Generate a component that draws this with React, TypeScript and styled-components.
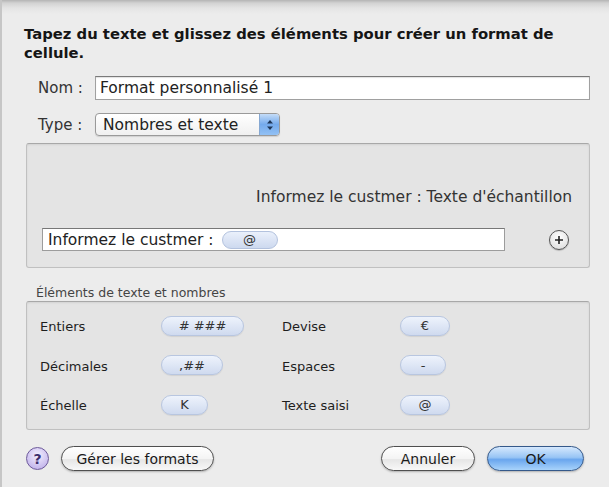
import React from 'react';
import styled, { createGlobalStyle } from 'styled-components';

const GlobalStyle = createGlobalStyle`
  html, body {
    margin: 0;
    padding: 0;
    background: #ececec;
  }
  * { box-sizing: border-box; }
`;

const Sheet = styled.div`
  width: 609px;
  height: 487px;
  background: linear-gradient(to bottom, #b4b4b4 0px, #d2d2d2 3px, #e4e4e4 8px, #ececec 14px);
  border-left: 2px solid #c6c6c6;
  font-family: "DejaVu Sans", "Liberation Sans", sans-serif;
  color: #1a1a1a;
  padding: 24px 19px 0 22px;
  display: flex;
  flex-direction: column;
`;

const Heading = styled.h1`
  margin: 0;
  font-size: 14.8px;
  font-weight: bold;
  line-height: 19px;
  color: #151515;
`;

const FieldRow = styled.div<{ $top: number }>`
  display: flex;
  align-items: center;
  margin-top: ${p => p.$top}px;
  padding-left: 14px;
`;

const Label = styled.span`
  width: 57px;
  font-size: 15px;
  color: #333;
  white-space: nowrap;
`;

const TextField = styled.div`
  flex: 1;
  height: 24px;
  background: #fff;
  border: 1px solid #a0a0a0;
  border-top-color: #7a7a7a;
  box-shadow: inset 0 1px 1px rgba(0, 0, 0, 0.12);
  font-size: 15.5px;
  line-height: 22px;
  padding-left: 4px;
  color: #222;
`;

const Select = styled.div`
  width: 185px;
  height: 23px;
  display: flex;
  align-items: center;
  justify-content: space-between;
  background: linear-gradient(#ffffff, #f0f0f0);
  border: 1px solid #9a9a9a;
  border-radius: 4px;
  font-size: 15.5px;
  padding-left: 7px;
  overflow: hidden;
  box-shadow: 0 1px 1px rgba(0, 0, 0, 0.12);
  color: #222;
`;

const Stepper = styled.div`
  width: 20px;
  height: 100%;
  background: linear-gradient(#c4dcf8, #74aaec 50%, #93c1f4 100%);
  display: flex;
  align-items: center;
  justify-content: center;
  border-left: 1px solid #86a8d2;
`;

const Panel = styled.div<{ $top: number; $h: number }>`
  margin-top: ${p => p.$top}px;
  margin-left: 2px;
  height: ${p => p.$h}px;
  background: #e4e4e4;
  border: 1px solid #c0c0c0;
  border-top-color: #a8a8a8;
  border-radius: 3px;
  box-shadow: inset 0 1px 2px rgba(0, 0, 0, 0.08);
`;

const PreviewPanel = styled(Panel)`
  padding: 44px 17px 0 15px;
  display: flex;
  flex-direction: column;
`;

const SampleText = styled.div`
  text-align: right;
  font-size: 15.5px;
  line-height: 18px;
  color: #333;
`;

const EditorRow = styled.div`
  display: flex;
  align-items: center;
  margin-top: 22px;
`;

const EditorField = styled.div`
  width: 463px;
  height: 23px;
  background: #fff;
  border: 1px solid #9c9c9c;
  border-top-color: #777;
  display: flex;
  align-items: center;
  padding-left: 5px;
  font-size: 15.5px;
  color: #222;
  gap: 8px;
`;

const Token = styled.span<{ $w: number }>`
  display: inline-flex;
  align-items: center;
  justify-content: center;
  width: ${p => p.$w}px;
  height: 18px;
  border-radius: 9px;
  background: linear-gradient(#eaf0fb, #cdd9ef);
  border: 1px solid #b3c2de;
  font-size: 13px;
  color: #333;
`;

const PlusButton = styled.div`
  margin-left: auto;
  margin-right: 3px;
  width: 20px;
  height: 20px;
  border-radius: 50%;
  border: 1px solid #555;
  background: radial-gradient(circle at 50% 35%, #ffffff, #d8d8d8);
  box-shadow: 0 1px 1px rgba(0, 0, 0, 0.2);
  display: flex;
  align-items: center;
  justify-content: center;
`;

const SectionTitle = styled.div`
  margin: 17px 0 0 12px;
  font-size: 12.5px;
  line-height: 16px;
  color: #444;
`;

const ElementsPanel = styled(Panel)`
  padding: 5px 0 0 13px;
  display: grid;
  grid-template-columns: 121px 121px 118px 100px;
  grid-auto-rows: 39.5px;
  align-content: start;
  align-items: center;
`;

const ElementLabel = styled.div`
  font-size: 13px;
  color: #1e1e1e;
`;

const Chip = styled.div<{ $w: number }>`
  width: ${p => p.$w}px;
  height: 20px;
  border-radius: 10px;
  background: linear-gradient(#eef3fc, #cfdaef);
  border: 1px solid #b8c6e0;
  box-shadow: 0 1px 1px rgba(0, 0, 0, 0.08);
  display: flex;
  align-items: center;
  justify-content: center;
  font-size: 13px;
  color: #333;
  margin-top: -2px;
`;

const Footer = styled.div`
  display: flex;
  align-items: center;
  margin-top: 16px;
  padding: 0 6px 0 2px;
  gap: 12px;
`;

const HelpButton = styled.div`
  width: 23px;
  height: 23px;
  border-radius: 50%;
  border: 1px solid #6d5a9a;
  background: radial-gradient(circle at 50% 35%, #f3efff, #b7a6e6);
  color: #3b2d6d;
  font-weight: bold;
  font-size: 14px;
  display: flex;
  align-items: center;
  justify-content: center;
`;

const PushButton = styled.div<{ $w: number; $primary?: boolean }>`
  width: ${p => p.$w}px;
  height: 25px;
  border-radius: 13px;
  border: 1.5px solid ${p => (p.$primary ? '#35598a' : '#4f4f4f')};
  background: ${p =>
    p.$primary
      ? 'linear-gradient(#d5e8fd 0%, #98c5f5 45%, #6aa6ee 55%, #a8d3fb 100%)'
      : 'linear-gradient(#ffffff 0%, #f4f4f4 50%, #e6e6e6 55%, #f8f8f8 100%)'};
  box-shadow: 0 1px 2px rgba(0, 0, 0, 0.25);
  display: flex;
  align-items: center;
  justify-content: center;
  font-size: 14px;
  color: #1a1a1a;
`;

const Spacer = styled.div`
  flex: 1;
`;

const elements = [
  ['Entiers', '# ###', 83, 'Devise', '€', 50],
  ['Décimales', ',##', 62, 'Espaces', '-', 46],
  ['Échelle', 'K', 47, 'Texte saisi', '@', 50],
] as const;

export default function App() {
  return (
    <>
      <GlobalStyle />
      <Sheet>
        <Heading>
          Tapez du texte et glissez des éléments pour créer un format de cellule.
        </Heading>

        <FieldRow $top={14}>
          <Label>Nom :</Label>
          <TextField>Format personnalisé 1</TextField>
        </FieldRow>

        <FieldRow $top={13}>
          <Label>Type :</Label>
          <Select>
            Nombres et texte
            <Stepper>
              <svg width="8" height="12" viewBox="0 0 8 12">
                <path d="M4 1 L7 4.5 H1 Z" fill="#1d3557" />
                <path d="M4 11 L7 7.5 H1 Z" fill="#1d3557" />
              </svg>
            </Stepper>
          </Select>
        </FieldRow>

        <PreviewPanel $top={7} $h={125}>
          <SampleText>Informez le custmer : Texte d'échantillon</SampleText>
          <EditorRow>
            <EditorField>
              Informez le custmer :<Token $w={56}>@</Token>
            </EditorField>
            <PlusButton>
              <svg width="10" height="10" viewBox="0 0 10 10">
                <path d="M5 1 V9 M1 5 H9" stroke="#222" strokeWidth="1.6" />
              </svg>
            </PlusButton>
          </EditorRow>
        </PreviewPanel>

        <SectionTitle>Éléments de texte et nombres</SectionTitle>
        <ElementsPanel $top={0} $h={129}>
          {elements.map(([l1, c1, w1, l2, c2, w2]) => (
            <React.Fragment key={l1}>
              <ElementLabel>{l1}</ElementLabel>
              <Chip $w={w1}>{c1}</Chip>
              <ElementLabel>{l2}</ElementLabel>
              <Chip $w={w2}>{c2}</Chip>
            </React.Fragment>
          ))}
        </ElementsPanel>

        <Footer>
          <HelpButton>?</HelpButton>
          <PushButton $w={153}>Gérer les formats</PushButton>
          <Spacer />
          <PushButton $w={94}>Annuler</PushButton>
          <PushButton $w={97} $primary>
            OK
          </PushButton>
        </Footer>
      </Sheet>
    </>
  );
}
